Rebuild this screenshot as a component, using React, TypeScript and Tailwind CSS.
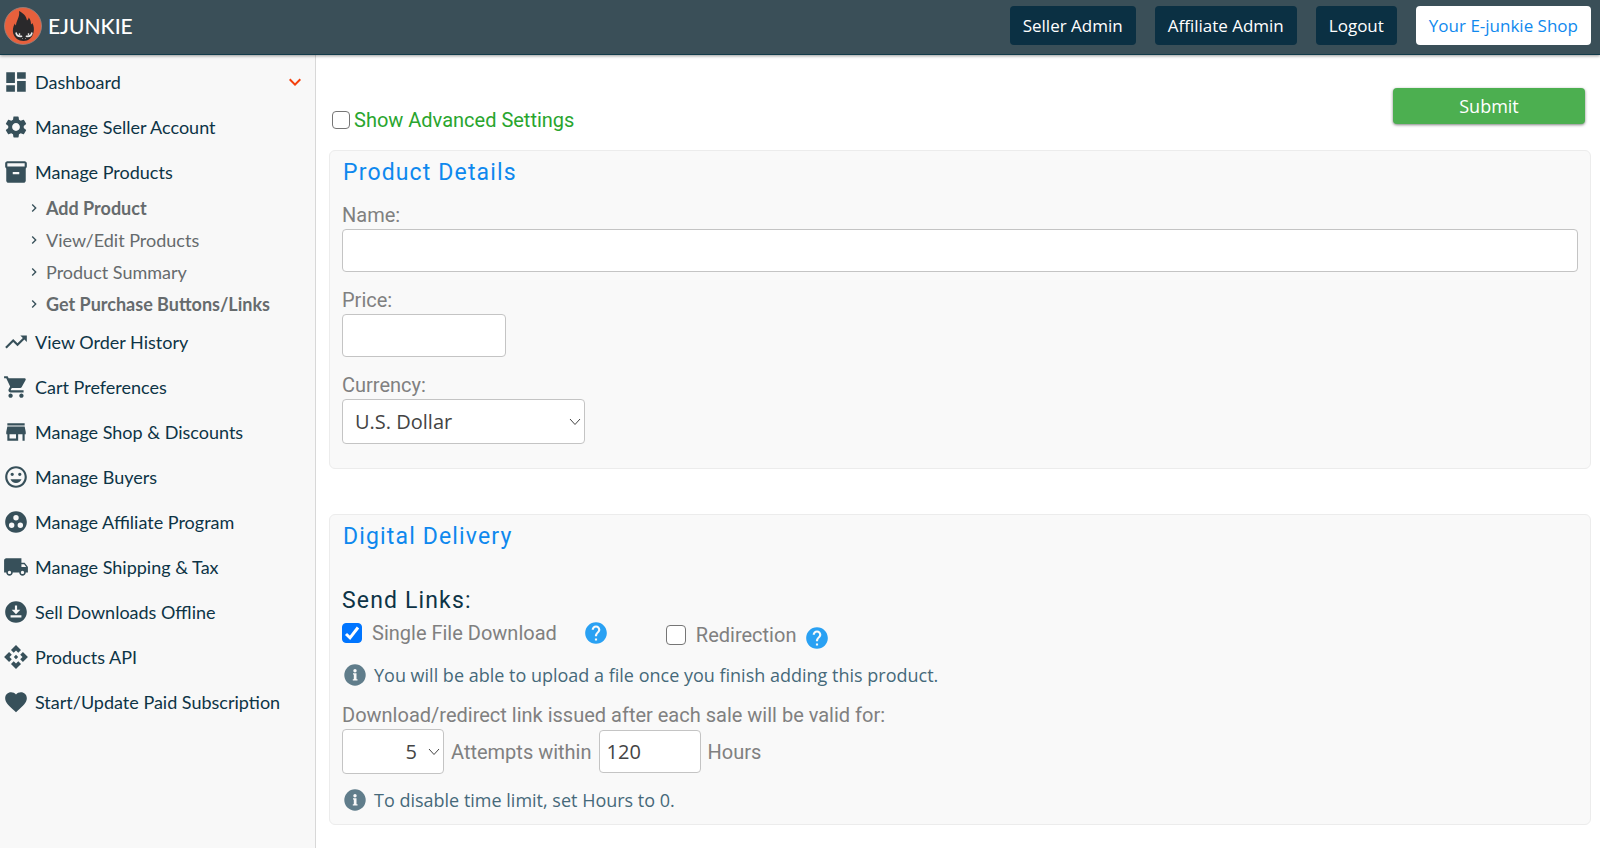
import React from 'react';
import {
  MdApi,
  MdChevronRight,
  MdDashboard,
  MdDownloadForOffline,
  MdExpandMore,
  MdFavorite,
  MdGroupWork,
  MdHelp,
  MdInventory2,
  MdLocalShipping,
  MdOutlineInsertEmoticon,
  MdSettings,
  MdShoppingCart,
  MdStore,
  MdTrendingUp,
} from 'react-icons/md';

const navItems = [
  { label: 'Dashboard', icon: MdDashboard, expandable: true },
  { label: 'Manage Seller Account', icon: MdSettings },
  {
    label: 'Manage Products',
    icon: MdInventory2,
    children: [
      { label: 'Add Product', bold: true },
      { label: 'View/Edit Products' },
      { label: 'Product Summary' },
      { label: 'Get Purchase Buttons/Links', bold: true },
    ],
  },
  { label: 'View Order History', icon: MdTrendingUp },
  { label: 'Cart Preferences', icon: MdShoppingCart },
  { label: 'Manage Shop & Discounts', icon: MdStore },
  { label: 'Manage Buyers', icon: MdOutlineInsertEmoticon },
  { label: 'Manage Affiliate Program', icon: MdGroupWork },
  { label: 'Manage Shipping & Tax', icon: MdLocalShipping },
  { label: 'Sell Downloads Offline', icon: MdDownloadForOffline },
  { label: 'Products API', icon: MdApi },
  { label: 'Start/Update Paid Subscription', icon: MdFavorite },
];

const adminLinks = ['Seller Admin', 'Affiliate Admin', 'Logout'];

const fieldClass =
  'block rounded border border-[#c4c4c4] bg-white font-["Open_Sans",sans-serif] text-xl text-[#444] outline-none';

const checkboxClass =
  'relative shrink-0 appearance-none rounded border border-[#767676] bg-white checked:border-[#0075ff] checked:bg-[#0075ff]';

const Logo = () => (
  <a href="#" className="flex items-center gap-1.5">
    <svg viewBox="0 0 38 38" className="size-[38px]" aria-hidden="true">
      <circle cx="19" cy="19" r="18.5" fill="#e8603c" stroke="#9a8480" strokeWidth="0.8" />
      <path
        d="M15 4c4 2 7.500 5 8 9.500 1-.6 1.600-1.700 1.700-2.900 2 2.400 2.300 4.600 2.300 6.900.7-.3 1.100-.9 1.300-1.500 1.700 3 2 6.500 1.200 9.500C28.200 31 24.500 34 19.500 34S10.500 31 9.200 26.500c-.8-3.500-.2-6.500 1.600-10 .2 1 .6 1.600 1.200 2.100C12 14 16.200 10 15 4z"
        fill="#2a292b"
      />
      <path
        d="M12 25.500c.5 3 2.500 4.300 6.200 3.700M28 25.500c-.5 3-2.500 4.300-6.200 3.700"
        fill="none"
        stroke="#e8e8e8"
        strokeWidth="1.600"
      />
      <path d="M15.500 26.300v2M24.500 26.300v2" stroke="#ddd" strokeWidth="1.400" />
      <path d="M18 31.500h1M21 31.500h1" stroke="#999" strokeWidth="0.8" />
    </svg>
    <span className="font-[Lato,sans-serif] text-[21px] leading-none font-medium text-white">EJUNKIE</span>
  </a>
);

const Checkbox = ({ id, size, defaultChecked }: { id: string; size: string; defaultChecked?: boolean }) => (
  <span className="relative flex shrink-0">
    <input id={id} type="checkbox" defaultChecked={defaultChecked} className={`peer ${checkboxClass} ${size}`} />
    <svg
      viewBox="0 0 20 20"
      className="pointer-events-none absolute inset-0 hidden size-full peer-checked:block"
      aria-hidden="true"
    >
      <path d="M4 11l4 3.800L16 4.500" fill="none" stroke="#fff" strokeWidth="3" />
    </svg>
  </span>
);

const Select = ({ id, width, align, children }: { id: string; width: string; align: string; children: React.ReactNode }) => (
  <span className={`relative block ${width}`}>
    <select id={id} className={`${fieldClass} h-[45px] w-full appearance-none pl-3 ${align}`}>
      {children}
    </select>
    <svg
      viewBox="0 0 12 8"
      className="pointer-events-none absolute top-[19px] right-1 h-2 w-3"
      fill="none"
      stroke="#444"
      aria-hidden="true"
    >
      <path d="M1 1l5 5.500L11 1" />
    </svg>
  </span>
);

const HelpButton = ({ label }: { label: string }) => (
  <button type="button" aria-label={label} className="text-[#2aa1f3]">
    <MdHelp className="size-[26px]" />
  </button>
);

const InfoIcon = () => (
  <svg viewBox="0 0 26 26" className="size-[26px] shrink-0" aria-hidden="true">
    <circle cx="13" cy="13" r="10.700" fill="#607d8b" />
    <circle cx="13" cy="8.700" r="1.700" fill="#f9f9f9" />
    <path d="M11 11.300h3.500v6h1V18.500H10.800V17.300h1v-4.700H11z" fill="#f9f9f9" />
  </svg>
);

const Note = ({ children }: { children: React.ReactNode }) => (
  <p className="flex items-center gap-1.5 font-['Open_Sans',sans-serif] text-lg leading-7 text-[#46697a]">
    <InfoIcon />
    {children}
  </p>
);

const Panel = ({ title, children }: { title: string; children: React.ReactNode }) => (
  <section className="rounded-md border border-[#ececec] bg-[#f9f9f9] px-3 pt-2">
    <h2 className="pl-px text-[23px] leading-7 tracking-wider text-[#0e88ee]">{title}</h2>
    {children}
  </section>
);

const Sidebar = () => (
  <nav className="w-[316px] shrink-0 border-r border-[#d8d8d8] bg-[#f8f8f8] pt-1 font-[Lato,sans-serif] text-lg text-[#0d3446]">
    <ul>
      {navItems.map((item) => (
        <li key={item.label}>
          <a href="#" className="flex h-[45px] items-center gap-1.5 pr-2 pl-[3px]">
            <item.icon className="size-[26px] shrink-0 text-[#37505a]" />
            <span>{item.label}</span>
            {item.expandable && <MdExpandMore className="ml-auto size-6 text-[#f4400c]" />}
          </a>
          {item.children && (
            <ul className="flex flex-col gap-[5px] pt-px pb-px pl-[26px] text-[#666b6d]">
              {item.children.map((child) => (
                <li key={child.label}>
                  <a
                    href="#"
                    className={`flex h-[27px] items-center gap-1 pb-px ${child.bold ? 'font-bold' : 'font-normal'}`}
                  >
                    <MdChevronRight className="size-4 shrink-0 text-[#37505a]" />
                    {child.label}
                  </a>
                </li>
              ))}
            </ul>
          )}
        </li>
      ))}
    </ul>
  </nav>
);

const App = () => {
  return (
    <div className="flex min-h-screen flex-col bg-white font-[Roboto,sans-serif]">
      {/* Top bar */}
      <header className="relative flex h-[55px] items-center justify-between border-b border-[#123b4a] bg-[#3a4f58] pr-[9px] pb-[3px] pl-1 shadow-[0_1px_3px_rgba(0,0,0,0.4)]">
        <Logo />
        <div className="flex items-center gap-[19px] font-['Open_Sans',sans-serif] text-[17px]">
          {adminLinks.map((label) => (
            <a key={label} href="#" className="flex h-[39px] items-center rounded bg-[#0b3043] px-[13px] text-white">
              {label}
            </a>
          ))}
          <a href="#" className="flex h-[39px] items-center rounded bg-white px-[13px] text-[#1089ee]">
            Your E-junkie Shop
          </a>
        </div>
      </header>

      <div className="flex flex-1">
        <Sidebar />

        {/* Product form */}
        <form className="min-w-0 flex-1 pt-[33px] pr-[9px] pb-4 pl-[13px] text-xl text-[#808080]">
          <div className="flex h-[62px] items-start justify-between pr-1.5 pl-[3px]">
            <div className="flex items-center gap-1 pt-[18px] leading-7">
              <Checkbox id="advanced" size="size-[18px]" />
              <label htmlFor="advanced" className="text-[#29a52e]">
                Show Advanced Settings
              </label>
            </div>
            <button
              type="submit"
              className="h-9 w-48 rounded bg-[#4caf50] font-['Open_Sans',sans-serif] text-lg text-white shadow-[0_1px_3px_rgba(0,0,0,0.5)]"
            >
              Submit
            </button>
          </div>

          <Panel title="Product Details">
            <div className="flex flex-col gap-3.5 pt-3.5 pb-6">
              <div>
                <label htmlFor="name" className="block leading-7">Name:</label>
                <input id="name" type="text" className={`${fieldClass} h-[43px] w-full px-2`} />
              </div>
              <div>
                <label htmlFor="price" className="block leading-7">Price:</label>
                <input id="price" type="text" className={`${fieldClass} h-[43px] w-[164px] px-2`} />
              </div>
              <div>
                <label htmlFor="currency" className="block leading-7">Currency:</label>
                <Select id="currency" width="w-[243px]" align="text-left">
                  <option>U.S. Dollar</option>
                  <option>Euro</option>
                </Select>
              </div>
            </div>
          </Panel>

          <div className="h-[45px]" />

          <Panel title="Digital Delivery">
            <div className="pt-9 pb-2.5">
              <h3 className="text-[23px] leading-7 tracking-wider text-[#0d3446]">Send Links:</h3>
              <div className="mt-1 mb-3.5 flex h-7 items-start gap-[57px]">
                <div className="flex items-center gap-[26px]">
                  <div className="flex items-center gap-2.5">
                    <Checkbox id="single" size="size-5" defaultChecked />
                    <label htmlFor="single">Single File Download</label>
                  </div>
                  <HelpButton label="About single file downloads" />
                </div>
                <div className="flex items-start gap-2 pt-0.5">
                  <div className="flex items-center gap-2.5">
                    <Checkbox id="redirection" size="size-5" />
                    <label htmlFor="redirection">Redirection</label>
                  </div>
                  <div className="flex pt-1">
                    <HelpButton label="About redirection" />
                  </div>
                </div>
              </div>
              <Note>You will be able to upload a file once you finish adding this product.</Note>
              <label htmlFor="attempts" className="mt-3 block leading-7">
                Download/redirect link issued after each sale will be valid for:
              </label>
              <div className="mb-3 flex items-center gap-[7px]">
                <Select id="attempts" width="w-[102px]" align="pr-[26px] text-right">
                  <option>5</option>
                  <option>10</option>
                </Select>
                <label htmlFor="hours">Attempts within</label>
                <input
                  id="hours"
                  type="text"
                  defaultValue="120"
                  className={`${fieldClass} h-[43px] w-[102px] px-[7px]`}
                />
                <span>Hours</span>
              </div>
              <Note>To disable time limit, set Hours to 0.</Note>
            </div>
          </Panel>
        </form>
      </div>
    </div>
  );
};

export default App;
